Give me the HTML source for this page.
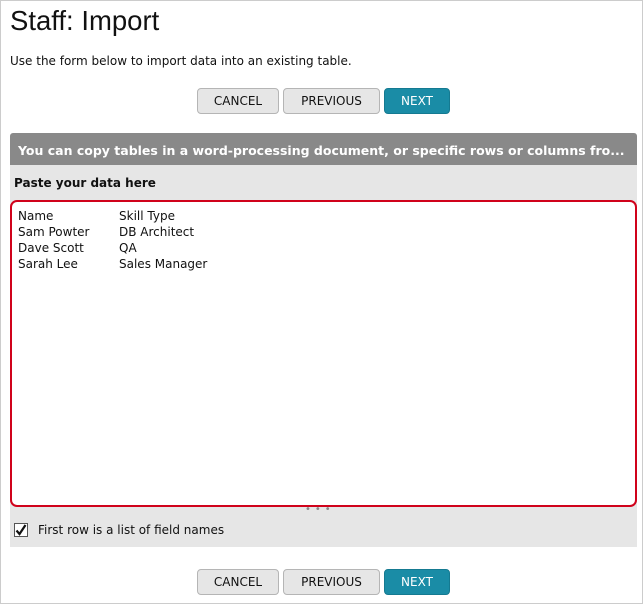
<!DOCTYPE html>
<html><head><style>
body{margin:0;width:643px;height:604px;overflow:hidden;background:#fff;font-family:"DejaVu Sans",Verdana,sans-serif;}
.page{position:absolute;left:0;top:0;width:641px;height:602px;border:1px solid #ccc;}
h1{position:absolute;left:10px;top:5px;margin:0;font:400 27.5px "Liberation Sans",sans-serif;color:#111;}
.desc{position:absolute;left:10px;top:54px;font-size:12px;color:#111;}
.btn{position:absolute;height:26px;box-sizing:border-box;border:1px solid #b5b5b5;border-radius:4px;background:#e6e6e6;font-size:12px;color:#111;text-align:center;line-height:25px;}
.next{background:#1a8ca6;border-color:#157a91;color:#fff;}
.hdr{position:absolute;left:10px;top:133px;width:627px;height:32px;background:#898989;border-radius:3px 3px 0 0;color:#fff;font-weight:bold;font-size:12.5px;line-height:36px;padding-left:8px;box-sizing:border-box;white-space:nowrap;overflow:hidden;}
.area{position:absolute;left:10px;top:165px;width:627px;height:382px;background:#e6e6e6;}
.lbl{position:absolute;left:14px;top:176px;font-weight:bold;font-size:12px;color:#111;}
.ta{position:absolute;left:10px;top:200px;width:627px;height:307px;box-sizing:border-box;border:2px solid #d0021b;border-radius:7px;background:#fff;font-size:12px;line-height:16px;color:#111;padding:6px 6px;}
.ta span{display:inline-block;width:101px;}
.dots{position:absolute;left:305px;top:504px;font-size:10px;color:#888;letter-spacing:4px;}
.cb{position:absolute;left:14px;top:523px;width:14px;height:14px;border:1px solid #555;background:#fff;box-sizing:border-box;}
.cbl{position:absolute;left:38px;top:523px;font-size:12px;color:#111;}
</style></head><body>
<div class="page"></div>
<h1>Staff: Import</h1>
<div class="desc">Use the form below to import data into an existing table.</div>
<div class="btn" style="left:197px;top:88px;width:82px">CANCEL</div>
<div class="btn" style="left:283px;top:88px;width:97px">PREVIOUS</div>
<div class="btn next" style="left:384px;top:88px;width:66px">NEXT</div>
<div class="hdr">You can copy tables in a word-processing document, or specific rows or columns fro...</div>
<div class="area"></div>
<div class="lbl">Paste your data here</div>
<div class="ta"><span>Name</span>Skill Type<br><span>Sam Powter</span>DB Architect<br><span>Dave Scott</span>QA<br><span>Sarah Lee</span>Sales Manager</div>
<div class="dots">•••</div>
<div class="cb"><svg width="14" height="14" viewBox="0 0 14 14" style="position:absolute;left:-1px;top:-1px"><path d="M2.5 7.5 L5.5 11 L11.5 2" fill="none" stroke="#111" stroke-width="2.2"/></svg></div>
<div class="cbl">First row is a list of field names</div>
<div class="btn" style="left:197px;top:569px;width:82px">CANCEL</div>
<div class="btn" style="left:283px;top:569px;width:97px">PREVIOUS</div>
<div class="btn next" style="left:384px;top:569px;width:66px">NEXT</div>
</body></html>
